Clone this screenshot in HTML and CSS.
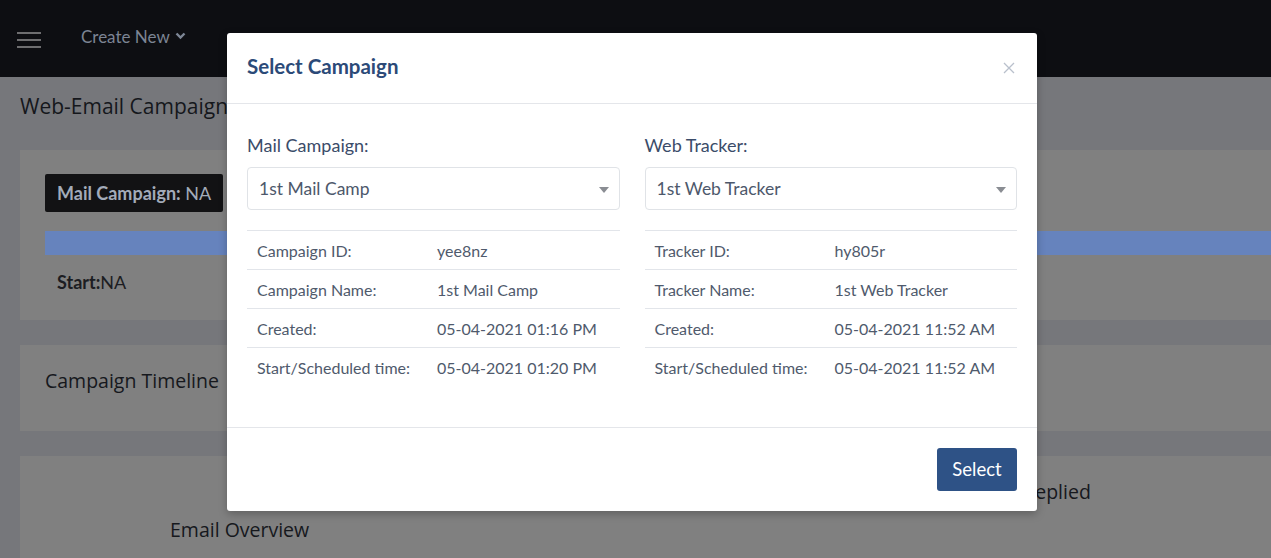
FILE: index.html
```html
<!DOCTYPE html>
<html lang="en">
<head>
<meta charset="utf-8">
<title>Web-Email Campaign</title>
<link rel="stylesheet" href="styles.css">
</head>
<body>
<header class="navbar">
  <svg class="hamburger" width="24" height="16" viewBox="0 0 24 16" aria-hidden="true">
    <rect x="0" y="0" width="24" height="2" fill="#6e6e70"/>
    <rect x="0" y="7" width="24" height="2" fill="#6e6e70"/>
    <rect x="0" y="14" width="24" height="2" fill="#6e6e70"/>
  </svg>
  <span class="nav-item">Create New
    <svg class="chev" width="11" height="8" viewBox="0 0 11 8" aria-hidden="true"><path d="M1.5 1.5 L5.5 5.5 L9.5 1.5" fill="none" stroke="#7d8696" stroke-width="2.4"/></svg>
  </span>
</header>

<main class="page">
  <h1 class="page-title">Web-Email Campaign Dashboard</h1>

  <section class="card card-status">
    <div class="badge"><b>Mail Campaign:</b> NA</div>
    <div class="progress"></div>
    <div class="start"><b>Start:</b>NA</div>
  </section>

  <section class="card card-timeline">
    <div class="card-heading">Campaign Timeline</div>
  </section>

  <section class="card card-overview">
    <div class="overview-left">Email Overview</div>
    <div class="overview-right">Replied</div>
  </section>
</main>

<div class="modal" role="dialog">
  <div class="modal-header">
    <h2 class="modal-title">Select Campaign</h2>
    <svg class="close" width="12" height="12" viewBox="0 0 12 12" aria-hidden="true"><path d="M1 1 L11 11 M11 1 L1 11" stroke="#b9c0cc" stroke-width="1.3"/></svg>
  </div>
  <div class="modal-body">
    <div class="col">
      <div class="field-label">Mail Campaign:</div>
      <div class="select"><span>1st Mail Camp</span><i class="caret"></i></div>
      <table class="info">
        <tr><td>Campaign ID:</td><td>yee8nz</td></tr>
        <tr><td>Campaign Name:</td><td>1st Mail Camp</td></tr>
        <tr><td>Created:</td><td>05-04-2021 01:16 PM</td></tr>
        <tr><td>Start/Scheduled time:</td><td>05-04-2021 01:20 PM</td></tr>
      </table>
    </div>
    <div class="col">
      <div class="field-label">Web Tracker:</div>
      <div class="select"><span>1st Web Tracker</span><i class="caret"></i></div>
      <table class="info">
        <tr><td>Tracker ID:</td><td>hy805r</td></tr>
        <tr><td>Tracker Name:</td><td>1st Web Tracker</td></tr>
        <tr><td>Created:</td><td>05-04-2021 11:52 AM</td></tr>
        <tr><td>Start/Scheduled time:</td><td>05-04-2021 11:52 AM</td></tr>
      </table>
    </div>
  </div>
  <div class="modal-footer">
    <button class="btn-select" type="button">Select</button>
  </div>
</div>
</body>
</html>
```

FILE: styles.css
```css
* { box-sizing: border-box; }

html, body {
  margin: 0;
  padding: 0;
  height: 100%;
}

body {
  background: #76777b;
  font-family: Lato, "Open Sans", sans-serif;
  overflow: hidden;
  width: 1271px;
}

.navbar {
  height: 77px;
  background: #0d0e12;
  display: flex;
  align-items: center;
  padding-left: 17px;
}

.hamburger {
  display: block;
  margin-top: 2px;
}

.nav-item {
  margin-left: 40px;
  margin-top: -4px;
  color: #7c8494;
  font-size: 17px;
  display: flex;
  align-items: center;
  gap: 5px;
}

.chev { display: block; margin-top: -2px; }

.page {
  padding-left: 20px;
  width: 1600px;
}

.page-title {
  margin: 0;
  padding-top: 16px;
  height: 73px;
  line-height: 26px;
  font-family: "Open Sans", sans-serif;
  font-weight: 400;
  font-size: 21px;
  color: #15171c;
}

.card {
  background: #808080;
  margin-bottom: 25px;
}

.card-status {
  height: 170px;
  padding: 24px 0 0 25px;
}

.badge {
  display: inline-block;
  background: #121214;
  color: #a3abb9;
  font-size: 18px;
  height: 38px;
  line-height: 38px;
  padding: 0 12px;
  border-radius: 2px;
}

.badge b { font-weight: 700; }

.progress {
  margin-top: 19px;
  height: 24px;
  background: #6683bd;
}

.start {
  margin-top: 16px;
  margin-left: 12px;
  font-size: 18px;
  color: #1c1d22;
  line-height: 22px;
}

.start b { font-weight: 700; }

.card-timeline {
  height: 86px;
  padding: 23px 0 0 25px;
}

.card-heading,
.overview-left,
.overview-right {
  font-family: "Open Sans", sans-serif;
  font-size: 19.5px;
  line-height: 26px;
  color: #16181d;
}

.card-overview {
  height: 200px;
  display: flex;
  align-items: flex-start;
}

.overview-left {
  margin-left: 150px;
  margin-top: 61px;
}

.overview-right {
  margin-left: 714px;
  margin-top: 23px;
}

/* Modal */
.modal {
  position: absolute;
  left: 227px;
  top: 33px;
  width: 810px;
  background: #fff;
  border-radius: 3px;
  box-shadow: 0 3px 8px rgba(0, 0, 0, 0.25);
  font-family: Lato, "Open Sans", sans-serif;
}

.modal-header {
  height: 71px;
  border-bottom: 1px solid #e4e6ea;
  display: flex;
  align-items: center;
  justify-content: space-between;
  padding: 0 22px 4px 20px;
}

.modal-title {
  margin: 0;
  font-size: 20.5px;
  font-weight: 700;
  color: #2c4a78;
}

.close { display: block; margin-top: 4px; }

.modal-body {
  display: grid;
  grid-template-columns: 1fr 1fr;
  column-gap: 25px;
  padding: 30px 20px 20px;
}

.field-label {
  font-size: 18px;
  line-height: 22px;
  color: #3b4c69;
  margin-bottom: 11px;
}

.select {
  height: 43px;
  border: 1px solid #e0e3e7;
  border-radius: 4px;
  display: flex;
  align-items: center;
  justify-content: space-between;
  padding: 0 10px 0 11px;
  font-size: 17.5px;
  color: #4d586b;
}

.caret {
  width: 0;
  height: 0;
  border-left: 5px solid transparent;
  border-right: 5px solid transparent;
  border-top: 6px solid #8a8d93;
  margin-top: 3px;
}

.info {
  width: 100%;
  margin-top: 20px;
  margin-bottom: 20px;
  border-collapse: collapse;
  font-size: 16px;
  color: #4f5a6c;
}

.info tr { border-top: 1px solid #e2e5ea; }

.info td {
  height: 39px;
  padding: 0 0 0 10px;
  vertical-align: middle;
}

.info td:first-child { width: 180px; }

.modal-footer {
  border-top: 1px solid #e4e6ea;
  padding: 20px;
  display: flex;
  justify-content: flex-end;
}

.btn-select {
  width: 80px;
  height: 43px;
  border: 0;
  border-radius: 3px;
  background: #2e5286;
  color: #fff;
  font-family: Lato, "Open Sans", sans-serif;
  font-size: 18.5px;
}
```
